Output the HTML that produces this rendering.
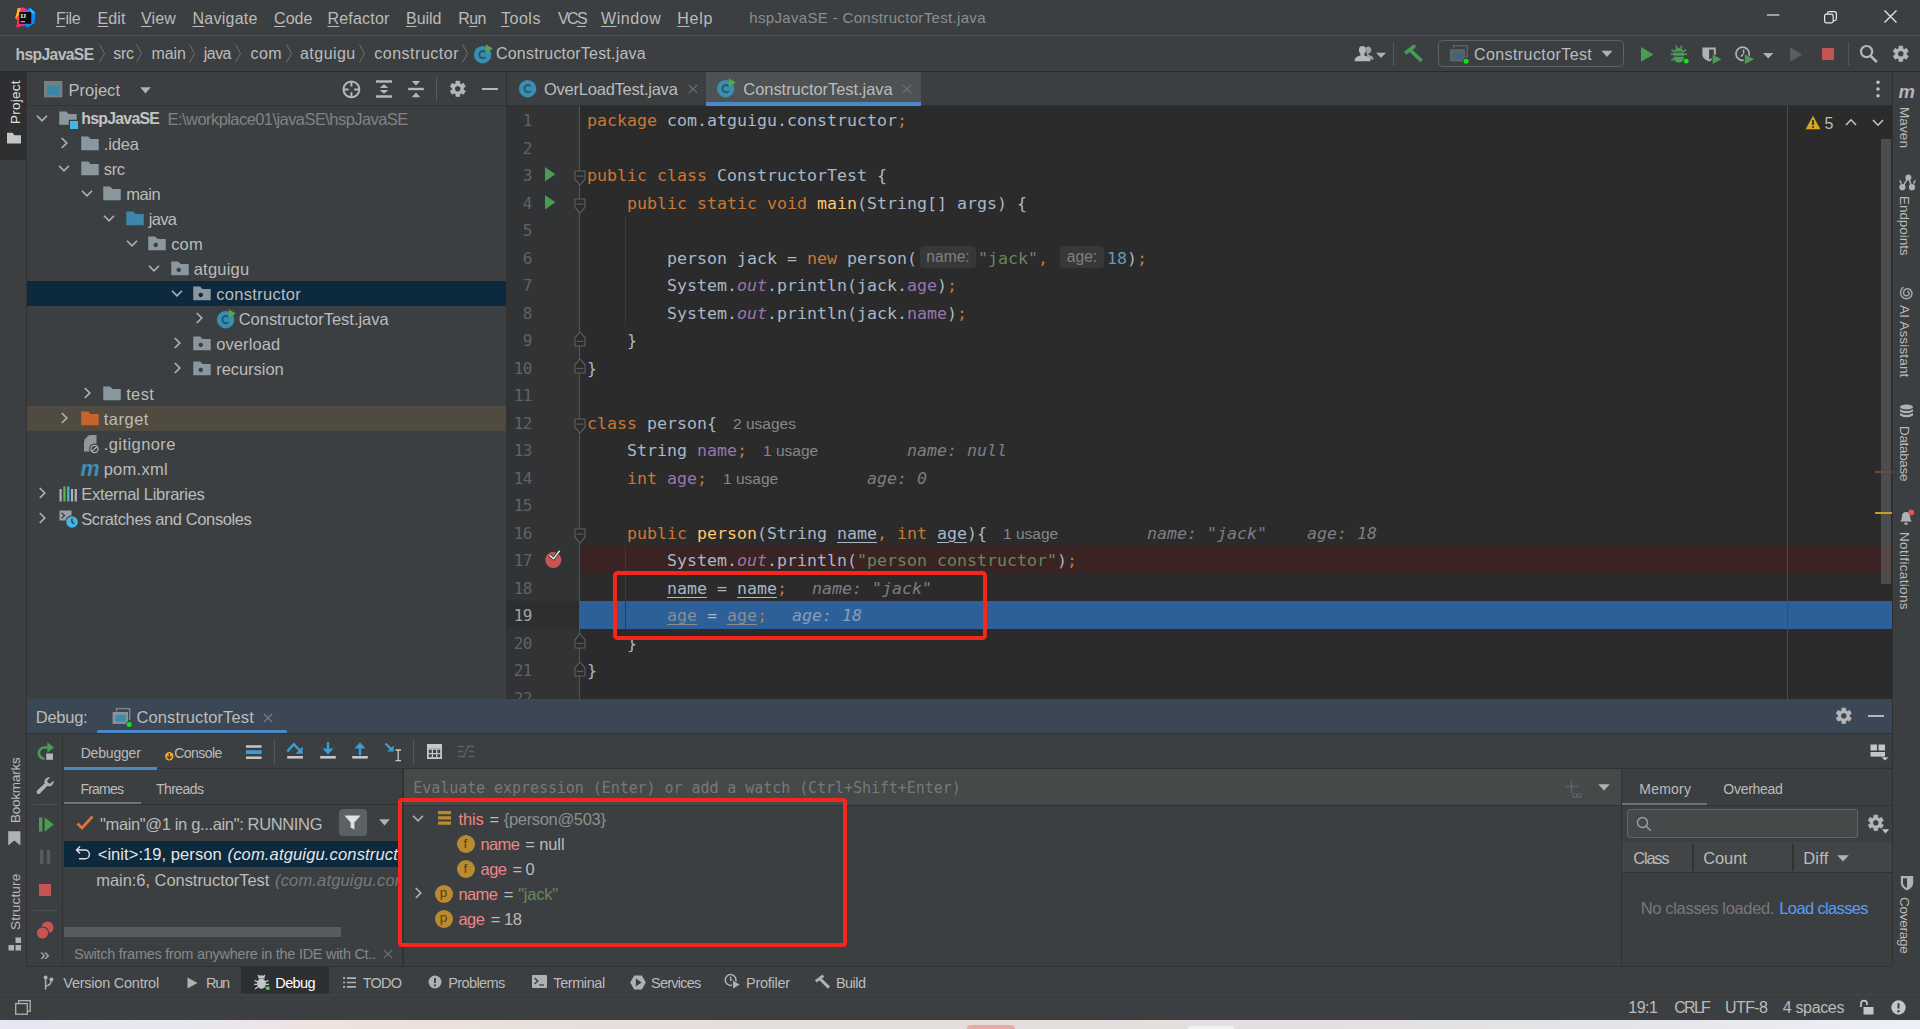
<!DOCTYPE html>
<html lang="en">
<head>
<meta charset="utf-8">
<title>hspJavaSE - ConstructorTest.java</title>
<style>
html,body{margin:0;padding:0;background:#3c3f41;}
body{width:1920px;height:1029px;position:relative;overflow:hidden;font-family:"Liberation Sans", "DejaVu Sans", sans-serif;color:#bbbbbb;}
div,svg,span.t,span.ln,pre.cl{position:absolute;}
svg{display:block;overflow:visible;}
.t{white-space:pre;line-height:1;display:block;}
.t u{text-decoration:underline;text-underline-offset:2px;text-decoration-thickness:1px;}
.mo{font-family:"DejaVu Sans Mono", "Liberation Mono", monospace;}
.ed{font-family:"DejaVu Sans Mono", "Liberation Mono", monospace;font-size:16.61px;}
.ln{left:0;width:25px;margin-top:1.3px;text-align:right;line-height:27.5px;height:27.5px;letter-spacing:-0.5px;font-size:16px;}
.cl{left:80px;margin:1.3px 0 0 0;font-family:inherit;font-size:inherit;line-height:27.5px;height:27.5px;color:#a9b7c6;white-space:pre;}
.cl b{font-weight:normal;}
.cl i{font-style:normal;display:inline-block;}
.k{color:#cc7832;} .s{color:#6a8759;} .n{color:#6897bb;} .f{color:#9876aa;} .fi{color:#9876aa;font-style:italic;} .m{color:#ffc66d;}
.pu{text-decoration:underline;text-underline-offset:3px;text-decoration-thickness:1px;}
.g{color:#888c93;}
.dv{color:#7b7f85;font-style:italic;} .x{color:#8a9db5;}
.h{font-family:"Liberation Sans", "DejaVu Sans", sans-serif;font-size:15.6px;color:#7e8184;background:#373839;border-radius:4px;height:22px;line-height:22px;text-align:center;vertical-align:1.6px;}
.u{font-family:"Liberation Sans", "DejaVu Sans", sans-serif;font-size:15.5px;color:#858789;height:22px;line-height:24px;box-sizing:border-box;padding-left:16px;vertical-align:0px;}
</style>
</head>
<body>
<section class="frame">
<div style="left:0px;top:0px;width:1920px;height:1029px;background:#3c3f41;"></div>
<div style="left:0px;top:35px;width:1920px;height:1px;background:#515355;"></div>
<div style="left:0px;top:71px;width:1920px;height:1px;background:#2b2b2b;"></div>
<div style="left:0px;top:72px;width:27px;height:923px;background:#3c3f41;"></div>
<div style="left:0px;top:72px;width:26px;height:88px;background:#2d2f30;"></div>
<div style="left:26px;top:72px;width:1px;height:895px;background:#323232;"></div>
<div style="left:27px;top:105px;width:480px;height:1px;background:#323232;"></div>
<div style="left:506px;top:72px;width:1px;height:627px;background:#323232;"></div>
</section>
<header class="menubar">
<svg style="left:14.8px;top:7px;" width="20.6" height="21" viewBox="0 0 20.6 21"><defs><linearGradient id="lg1" x1="0" y1="0" x2="1" y2="0.25"><stop offset="0" stop-color="#fda00f"/><stop offset=".3" stop-color="#fe2f6b"/><stop offset=".55" stop-color="#b13fd6"/><stop offset=".7" stop-color="#1a7ff5"/><stop offset="1" stop-color="#0a8af7"/></linearGradient></defs>
<path d="M2.4 1.4 L8.5 0.2 L12.4 3 L14.4 0.6 L20.4 6 L19.6 16 L12.2 20.8 L9.2 18.2 L1.4 20.6 L2.6 13.4 L0.2 11.2 L1.8 6 Z" fill="url(#lg1)"/>
<path d="M2.4 1.4 L5.6 0.9 L4 8 L0.2 11.2 L1.8 6 Z" fill="#fdb60d"/><path d="M14.4 0.6 L20.4 6 L16.4 6.4 Z" fill="#21d0fd"/><path d="M1.4 20.6 L2.6 13.4 L9.2 18.2 Z" fill="#fe2b62"/>
<rect x="4.3" y="5" width="12" height="11.8" fill="#0b0b0f"/><rect x="5.6" y="14.3" width="4.4" height="0.9" fill="#e8e8e8"/>
<text x="5.4" y="11.1" font-family="Liberation Serif, serif" font-weight="700" font-size="6.6" fill="#ffffff" letter-spacing="-0.2">IJ</text></svg>
<span class="t" style="left:56px;top:10.56px;font-size:16px;color:#bbbbbb;letter-spacing:-0.371px;"><u>F</u>ile</span>
<span class="t" style="left:97.5px;top:10.56px;font-size:16px;color:#bbbbbb;letter-spacing:0.121px;"><u>E</u>dit</span>
<span class="t" style="left:141px;top:10.56px;font-size:16px;color:#bbbbbb;letter-spacing:0.170px;"><u>V</u>iew</span>
<span class="t" style="left:192.5px;top:10.56px;font-size:16px;color:#bbbbbb;letter-spacing:0.246px;"><u>N</u>avigate</span>
<span class="t" style="left:274px;top:10.56px;font-size:16px;color:#bbbbbb;letter-spacing:0.067px;"><u>C</u>ode</span>
<span class="t" style="left:327.5px;top:10.56px;font-size:16px;color:#bbbbbb;letter-spacing:0.202px;"><u>R</u>efactor</span>
<span class="t" style="left:406px;top:10.56px;font-size:16px;color:#bbbbbb;letter-spacing:-0.017px;"><u>B</u>uild</span>
<span class="t" style="left:458.3px;top:10.56px;font-size:16px;color:#bbbbbb;letter-spacing:-0.670px;">R<u>u</u>n</span>
<span class="t" style="left:501px;top:10.56px;font-size:16px;color:#bbbbbb;letter-spacing:0.520px;"><u>T</u>ools</span>
<span class="t" style="left:558px;top:10.56px;font-size:16px;color:#bbbbbb;letter-spacing:-1.682px;">VC<u>S</u></span>
<span class="t" style="left:601px;top:10.56px;font-size:16px;color:#bbbbbb;letter-spacing:0.560px;"><u>W</u>indow</span>
<span class="t" style="left:677.3px;top:10.56px;font-size:16px;color:#bbbbbb;letter-spacing:0.708px;"><u>H</u>elp</span>
<span class="t" style="left:749.3px;top:10.30px;font-size:15px;color:#8c8e90;letter-spacing:0.332px;">hspJavaSE - ConstructorTest.java</span>
<svg style="left:1767px;top:9.3px;" width="12.4" height="12" viewBox="0 0 12.4 12"><path d="M0 6h12.4" stroke="#f0f0f0" stroke-width="1.1"/></svg>
<svg style="left:1824.2px;top:10.9px;" width="13" height="13" viewBox="0 0 13 13"><rect x="0.6" y="3.2" width="8.6" height="8.6" rx="1.8" fill="none" stroke="#e8e8e8" stroke-width="1.2"/><path d="M3.4 3 V2.4 Q3.4 0.6 5.2 0.6 H10.2 Q12.4 0.6 12.4 2.8 V7.8 Q12.4 9.6 10.6 9.6 H9.6" fill="none" stroke="#e8e8e8" stroke-width="1.2"/></svg>
<svg style="left:1883.6px;top:10.4px;" width="13" height="13" viewBox="0 0 13 13"><path d="M0.5 0.5 L12.5 12.5 M12.5 0.5 L0.5 12.5" stroke="#e8e8e8" stroke-width="1.3"/></svg>
</header>
<nav class="navbar">
<span class="t" style="left:15.5px;top:46.59px;font-size:15.6px;color:#bbbbbb;font-weight:700;letter-spacing:-0.585px;">hspJavaSE</span>
<span class="t" style="left:113.25px;top:46.26px;font-size:16px;color:#bbbbbb;letter-spacing:-0.331px;">src</span>
<span class="t" style="left:151.5px;top:46.26px;font-size:16px;color:#bbbbbb;letter-spacing:-0.125px;">main</span>
<span class="t" style="left:203.75px;top:46.26px;font-size:16px;color:#bbbbbb;letter-spacing:-0.531px;">java</span>
<span class="t" style="left:250.5px;top:46.26px;font-size:16px;color:#bbbbbb;letter-spacing:0.406px;">com</span>
<span class="t" style="left:300px;top:46.26px;font-size:16px;color:#bbbbbb;letter-spacing:0.462px;">atguigu</span>
<span class="t" style="left:374.25px;top:46.26px;font-size:16px;color:#bbbbbb;letter-spacing:0.510px;">constructor</span>
<svg style="left:98.5px;top:43.5px;" width="7" height="19" viewBox="0 0 7 19"><path d="M0.5 0.5 L5.5 9.5 L0.5 18.5" fill="none" stroke="#6e7072" stroke-width="1"/></svg>
<svg style="left:136px;top:43.5px;" width="7" height="19" viewBox="0 0 7 19"><path d="M0.5 0.5 L5.5 9.5 L0.5 18.5" fill="none" stroke="#6e7072" stroke-width="1"/></svg>
<svg style="left:189px;top:43.5px;" width="7" height="19" viewBox="0 0 7 19"><path d="M0.5 0.5 L5.5 9.5 L0.5 18.5" fill="none" stroke="#6e7072" stroke-width="1"/></svg>
<svg style="left:235px;top:43.5px;" width="7" height="19" viewBox="0 0 7 19"><path d="M0.5 0.5 L5.5 9.5 L0.5 18.5" fill="none" stroke="#6e7072" stroke-width="1"/></svg>
<svg style="left:286px;top:43.5px;" width="7" height="19" viewBox="0 0 7 19"><path d="M0.5 0.5 L5.5 9.5 L0.5 18.5" fill="none" stroke="#6e7072" stroke-width="1"/></svg>
<svg style="left:359px;top:43.5px;" width="7" height="19" viewBox="0 0 7 19"><path d="M0.5 0.5 L5.5 9.5 L0.5 18.5" fill="none" stroke="#6e7072" stroke-width="1"/></svg>
<svg style="left:461.5px;top:43.5px;" width="7" height="19" viewBox="0 0 7 19"><path d="M0.5 0.5 L5.5 9.5 L0.5 18.5" fill="none" stroke="#6e7072" stroke-width="1"/></svg>
<svg style="left:473.0px;top:43.5px;" width="20" height="20" viewBox="0 0 16 16"><circle cx="7.7" cy="8.5" r="7" fill="#3a8fb0"/><path d="M10.2 10.4 A2.9 2.9 0 1 1 10.2 6.6" fill="none" stroke="#28576b" stroke-width="1.5"/><path d="M10.2 0.2 L15.8 3.6 L10.2 7.2 Z" fill="#57a64a"/></svg>
<span class="t" style="left:496px;top:46.26px;font-size:16px;color:#bbbbbb;letter-spacing:0.198px;">ConstructorTest.java</span>
<svg style="left:1354px;top:45px;" width="33" height="18" viewBox="0 0 33 18"><path d="M11.5 3 a3.2 3.6 0 1 1 2.6 5.6 L15 10 Q19.4 11 19.6 14.4 H14 Z" fill="#9da0a2"/><ellipse cx="8.4" cy="5" rx="3.5" ry="4" fill="#b4b6b8"/><path d="M0.6 16.2 Q0.6 12.6 3.4 11.6 L6.4 10.4 V8 H10.4 V10.4 L13.4 11.6 Q16.4 12.6 16.4 16.2 Z" fill="#b4b6b8"/><path d="M22 7.8 H32 L27 13 Z" fill="#afb1b3"/></svg>
<div style="left:1393.2px;top:42px;width:1px;height:24px;background:#555759;"></div>
<svg style="left:1403px;top:44px;" width="22" height="20" viewBox="0 0 22 20"><path d="M2.2 9.2 L11.6 2" stroke="#499c54" stroke-width="3.6" fill="none"/><path d="M7.4 6.2 L18.6 17" stroke="#499c54" stroke-width="3.6" fill="none"/><path d="M8.6 1.6 L12.6 0.9 L13.4 2.6 Z" fill="#499c54"/></svg>
<div style="left:1437.6px;top:40px;width:186px;height:27.4px;border:1.2px solid #606366;border-radius:4.5px;box-sizing:border-box;"></div>
<svg style="left:1449px;top:44px;" width="21" height="20" viewBox="0 0 21 20"><rect x="4.6" y="1.7" width="13.6" height="11" fill="none" stroke="#596065" stroke-width="1.5"/><rect x="0.2" y="4.4" width="16.4" height="13.8" fill="#3c3f41"/><rect x="0.9" y="5.1" width="15.1" height="12.4" fill="#5c6266"/><rect x="3.6" y="8.9" width="10.4" height="6.2" fill="#3f6679"/><circle cx="17.1" cy="17.2" r="3.2" fill="#3c3f41"/><circle cx="17.1" cy="17.2" r="2.5" fill="#12e212"/></svg>
<span class="t" style="left:1474px;top:46.76px;font-size:16px;color:#bbbbbb;letter-spacing:0.411px;">ConstructorTest</span>
<svg style="left:1601px;top:50px;" width="12" height="8" viewBox="0 0 12 8"><path d="M0.5 0.8 H11.5 L6 7 Z" fill="#afb1b3"/></svg>
<svg style="left:1640.8px;top:46.5px;" width="13" height="15" viewBox="0 0 13 15"><path d="M0 0 L12.6 7.4 L0 14.8 Z" fill="#499c54"/></svg>
<svg style="left:1670px;top:45px;" width="19" height="19" viewBox="0 0 19 19"><path d="M4.4 6.6 Q4.4 3 8.8 3 Q13.2 3 13.2 6.6 Z" fill="#499c54"/><rect x="3.6" y="7.6" width="10.4" height="3.1" fill="#499c54"/><path d="M3.6 11.8 H14 Q14 17.6 8.8 17.6 Q3.6 17.6 3.6 11.8 Z" fill="#499c54"/><path d="M0.6 9.2 H17 M1.6 4.6 L4.6 7 M16 4.6 L13 7 M1.4 15.6 L4.6 13 M16.2 15.6 L13 13 M5.6 0.6 L7.4 3.4 M12 0.6 L10.2 3.4" stroke="#499c54" stroke-width="1.6" fill="none"/><circle cx="16.2" cy="16.2" r="3.2" fill="#3c3f41"/><circle cx="16.2" cy="16.2" r="2.4" fill="#1ee01e"/></svg>
<svg style="left:1701.5px;top:46.5px;" width="21" height="18" viewBox="0 0 21 18"><path d="M0.4 0.4 H13.8 V7.6 Q13.8 12 7.1 14.6 Q0.4 12 0.4 7.6 Z" fill="#afb1b3"/><path d="M7.1 2.4 H11.8 V7.4 Q11.8 10.4 7.1 12.4 Z" fill="#3c3f41"/><path d="M9.6 6 L20.4 12 L9.6 18 Z" fill="#3c3f41"/><path d="M10.6 7.4 L19.4 12.2 L10.6 17 Z" fill="#499c54"/></svg>
<svg style="left:1735px;top:45.5px;" width="21" height="19" viewBox="0 0 21 19"><circle cx="7.6" cy="7.8" r="6.6" fill="none" stroke="#afb1b3" stroke-width="1.7"/><path d="M8.6 3.6 V8 L5.8 10.6" fill="none" stroke="#afb1b3" stroke-width="1.5"/><path d="M8.6 7 L20.4 13 L8.6 19 Z" fill="#3c3f41"/><path d="M9.9 8.6 L19.2 13.2 L9.9 18 Z" fill="#499c54"/></svg>
<svg style="left:1763px;top:53px;" width="11" height="6" viewBox="0 0 11 6"><path d="M0 0 H10.4 L5.2 5.6 Z" fill="#afb1b3"/></svg>
<svg style="left:1789.8px;top:46.5px;" width="13" height="15" viewBox="0 0 13 15"><path d="M0 0 L12.4 7.4 L0 14.8 Z" fill="#5a5d5f"/></svg>
<div style="left:1821.8px;top:48px;width:12.4px;height:12.2px;background:#c75450;"></div>
<div style="left:1848.2px;top:42px;width:1px;height:24px;background:#515456;"></div>
<svg style="left:1859px;top:44px;" width="20" height="20" viewBox="0 0 20 20"><circle cx="7.6" cy="7.6" r="5.6" fill="none" stroke="#b4b6b8" stroke-width="2.2"/><path d="M11.6 11.8 L17.8 18" stroke="#b4b6b8" stroke-width="2.6"/></svg>
<svg style="left:1892.2px;top:45.2px;" width="17.6" height="17.6" viewBox="0 0 16 16"><path fill-rule="evenodd" d="M9.80 3.23 L9.71 1.01 L6.29 1.01 L6.20 3.23 L4.76 4.06 L2.80 3.02 L1.09 5.99 L2.97 7.17 L2.97 8.83 L1.09 10.01 L2.80 12.98 L4.76 11.94 L6.20 12.77 L6.29 14.99 L9.71 14.99 L9.80 12.77 L11.24 11.94 L13.20 12.98 L14.91 10.01 L13.03 8.83 L13.03 7.17 L14.91 5.99 L13.20 3.02 L11.24 4.06 Z M8 5.2 a2.8 2.8 0 1 0 0.001 0 Z" fill="#b4b6b8" stroke="#b4b6b8" stroke-width="0.6" stroke-linejoin="round"/></svg>
</nav>
<aside class="left-stripe">
<span class="t" style="left:15.8px;top:124.4px;transform:rotate(-90deg) translateY(-50%);transform-origin:0 0;font-size:13.5px;color:#e0e0e0;letter-spacing:0.241px;">Project</span>
<svg style="left:6px;top:132px;" width="16" height="12" viewBox="0 0 16 12"><path d="M1 11.5 H15 V3.2 H8.4 L6.6 0.8 H1 Z" fill="#c3c5c7"/></svg>
<span class="t" style="left:15.8px;top:823.3px;transform:rotate(-90deg) translateY(-50%);transform-origin:0 0;font-size:13.5px;color:#bbbbbb;letter-spacing:-0.227px;">Bookmarks</span>
<svg style="left:8.4px;top:830.5px;" width="13" height="15" viewBox="0 0 13 15"><path d="M0.2 0.3 H12.4 V14.6 L6.3 9.6 L0.2 14.6 Z" fill="#afb1b3"/></svg>
<span class="t" style="left:15.8px;top:930px;transform:rotate(-90deg) translateY(-50%);transform-origin:0 0;font-size:13.5px;color:#bbbbbb;letter-spacing:0.179px;">Structure</span>
<svg style="left:8px;top:937px;" width="14" height="14" viewBox="0 0 14 14"><rect x="7.5" y="0.5" width="5.5" height="5.5" fill="#afb1b3"/><rect x="0.5" y="8" width="5.5" height="5.5" fill="#afb1b3"/><rect x="7.5" y="8" width="5.5" height="5.5" fill="#afb1b3"/></svg>
</aside>
<aside class="project">
<svg style="left:43.8px;top:81.3px;" width="18.4" height="16.4" viewBox="0 0 18.4 16.4"><rect x="0" y="0" width="18.4" height="16.4" fill="#757f86"/><rect x="3.1" y="4.4" width="12.5" height="9.7" fill="#3a88a8"/></svg>
<span class="t" style="left:68.4px;top:81.83px;font-size:16.5px;color:#bbbbbb;letter-spacing:0.037px;">Project</span>
<svg style="left:139.5px;top:87px;" width="11" height="7" viewBox="0 0 11 7"><path d="M0.2 0.3 H10.8 L5.5 6.6 Z" fill="#afb1b3"/></svg>
<svg style="left:341.5px;top:79.5px;" width="19" height="19" viewBox="0 0 19 19"><circle cx="9.4" cy="9.4" r="7.9" fill="none" stroke="#b4b6b8" stroke-width="2"/><path d="M9.4 1.5 V6.6 M9.4 12.2 V17.3 M1.5 9.4 H6.6 M12.2 9.4 H17.3" stroke="#b4b6b8" stroke-width="2"/></svg>
<svg style="left:376px;top:80px;" width="16" height="18" viewBox="0 0 16 18"><path d="M0 1.4 H16 M0 16.6 H16" stroke="#b4b6b8" stroke-width="2.5"/><path d="M3.7 8.1 L8 4.3 L12.3 8.1 Z M3.7 10 L8 13.8 L12.3 10 Z" fill="#b4b6b8"/></svg>
<svg style="left:408px;top:80px;" width="16" height="18" viewBox="0 0 16 18"><path d="M0.2 9 H15.8" stroke="#b4b6b8" stroke-width="2.4"/><path d="M3.7 1 L8 5.6 L12.3 1 Z M3.7 17.2 L8 12.6 L12.3 17.2 Z" fill="#b4b6b8"/></svg>
<div style="left:436px;top:77px;width:1px;height:23.5px;background:#595c5e;"></div>
<svg style="left:449.2px;top:80.2px;" width="17.6" height="17.6" viewBox="0 0 16 16"><path fill-rule="evenodd" d="M9.80 3.23 L9.71 1.01 L6.29 1.01 L6.20 3.23 L4.76 4.06 L2.80 3.02 L1.09 5.99 L2.97 7.17 L2.97 8.83 L1.09 10.01 L2.80 12.98 L4.76 11.94 L6.20 12.77 L6.29 14.99 L9.71 14.99 L9.80 12.77 L11.24 11.94 L13.20 12.98 L14.91 10.01 L13.03 8.83 L13.03 7.17 L14.91 5.99 L13.20 3.02 L11.24 4.06 Z M8 5.2 a2.8 2.8 0 1 0 0.001 0 Z" fill="#b4b6b8" stroke="#b4b6b8" stroke-width="0.6" stroke-linejoin="round"/></svg>
<div style="left:482px;top:87.8px;width:16px;height:2.4px;background:#b4b6b8;"></div>
<div style="left:27px;top:281px;width:479px;height:25px;background:#0d293e;"></div>
<div style="left:27px;top:406px;width:479px;height:25px;background:#4f4b41;"></div>
<span class="t" style="left:81.2px;top:111.43px;font-size:15.8px;color:#c4c4c4;font-weight:700;letter-spacing:-0.707px;">hspJavaSE</span>
<svg style="left:31.800000000000004px;top:107.9px;" width="20" height="20" viewBox="0 0 16 16"><path d="M4 6.2 L8 10.2 L12 6.2" fill="none" stroke="#adb0b3" stroke-width="1.4"/></svg>
<svg style="left:57.7px;top:109.0px;" width="20" height="20" viewBox="0 0 16 16"><path d="M1 12.5 H15 V4 H8.5 L6.5 2 H1 Z" fill="#8b979f"/><rect x="8.6" y="8.6" width="7.4" height="7.4" fill="#3c3f41"/><rect x="9.6" y="9.6" width="6.4" height="6.4" fill="#40b6e0"/></svg>
<span class="t" style="left:103.7px;top:135.83px;font-size:16.5px;color:#bbbbbb;letter-spacing:-0.107px;">.idea</span>
<svg style="left:54.0px;top:133.0px;" width="20" height="20" viewBox="0 0 16 16"><path d="M6.2 4 L10.2 8 L6.2 12" fill="none" stroke="#adb0b3" stroke-width="1.4"/></svg>
<svg style="left:79.9px;top:133.8px;" width="20" height="20" viewBox="0 0 16 16"><path d="M1 13 H15 V4 H8.5 L6.5 2 H1 Z" fill="#8b979f"/></svg>
<span class="t" style="left:103.7px;top:160.83px;font-size:16.5px;color:#bbbbbb;letter-spacing:-0.280px;">src</span>
<svg style="left:54.3px;top:157.9px;" width="20" height="20" viewBox="0 0 16 16"><path d="M4 6.2 L8 10.2 L12 6.2" fill="none" stroke="#adb0b3" stroke-width="1.4"/></svg>
<svg style="left:79.9px;top:158.8px;" width="20" height="20" viewBox="0 0 16 16"><path d="M1 13 H15 V4 H8.5 L6.5 2 H1 Z" fill="#8b979f"/></svg>
<span class="t" style="left:126.2px;top:185.83px;font-size:16.5px;color:#bbbbbb;letter-spacing:-0.447px;">main</span>
<svg style="left:76.8px;top:182.9px;" width="20" height="20" viewBox="0 0 16 16"><path d="M4 6.2 L8 10.2 L12 6.2" fill="none" stroke="#adb0b3" stroke-width="1.4"/></svg>
<svg style="left:102.4px;top:183.8px;" width="20" height="20" viewBox="0 0 16 16"><path d="M1 13 H15 V4 H8.5 L6.5 2 H1 Z" fill="#8b979f"/></svg>
<span class="t" style="left:148.7px;top:210.83px;font-size:16.5px;color:#bbbbbb;letter-spacing:-0.652px;">java</span>
<svg style="left:99.29999999999998px;top:207.9px;" width="20" height="20" viewBox="0 0 16 16"><path d="M4 6.2 L8 10.2 L12 6.2" fill="none" stroke="#adb0b3" stroke-width="1.4"/></svg>
<svg style="left:124.89999999999998px;top:208.8px;" width="20" height="20" viewBox="0 0 16 16"><path d="M1 13 H15 V4 H8.5 L6.5 2 H1 Z" fill="#3d88a8"/></svg>
<span class="t" style="left:171.2px;top:235.83px;font-size:16.5px;color:#bbbbbb;letter-spacing:0.131px;">com</span>
<svg style="left:121.79999999999998px;top:232.9px;" width="20" height="20" viewBox="0 0 16 16"><path d="M4 6.2 L8 10.2 L12 6.2" fill="none" stroke="#adb0b3" stroke-width="1.4"/></svg>
<svg style="left:147.39999999999998px;top:233.8px;" width="20" height="20" viewBox="0 0 16 16"><path fill-rule="evenodd" d="M1 13 H15 V4 H8.5 L6.5 2 H1 Z M7 6.9 a1.8 1.8 0 1 0 0.001 0 Z" fill="#8b979f"/></svg>
<span class="t" style="left:193.7px;top:260.83px;font-size:16.5px;color:#bbbbbb;letter-spacing:0.225px;">atguigu</span>
<svg style="left:144.29999999999998px;top:257.9px;" width="20" height="20" viewBox="0 0 16 16"><path d="M4 6.2 L8 10.2 L12 6.2" fill="none" stroke="#adb0b3" stroke-width="1.4"/></svg>
<svg style="left:169.89999999999998px;top:258.8px;" width="20" height="20" viewBox="0 0 16 16"><path fill-rule="evenodd" d="M1 13 H15 V4 H8.5 L6.5 2 H1 Z M7 6.9 a1.8 1.8 0 1 0 0.001 0 Z" fill="#8b979f"/></svg>
<span class="t" style="left:216.2px;top:285.83px;font-size:16.5px;color:#bbbbbb;letter-spacing:0.302px;">constructor</span>
<svg style="left:166.79999999999998px;top:282.9px;" width="20" height="20" viewBox="0 0 16 16"><path d="M4 6.2 L8 10.2 L12 6.2" fill="none" stroke="#adb0b3" stroke-width="1.4"/></svg>
<svg style="left:192.39999999999998px;top:283.8px;" width="20" height="20" viewBox="0 0 16 16"><path fill-rule="evenodd" d="M1 13 H15 V4 H8.5 L6.5 2 H1 Z M7 6.9 a1.8 1.8 0 1 0 0.001 0 Z" fill="#8b979f"/></svg>
<span class="t" style="left:238.7px;top:310.83px;font-size:16.5px;color:#bbbbbb;letter-spacing:-0.021px;">ConstructorTest.java</span>
<svg style="left:189.0px;top:308.0px;" width="20" height="20" viewBox="0 0 16 16"><path d="M6.2 4 L10.2 8 L6.2 12" fill="none" stroke="#adb0b3" stroke-width="1.4"/></svg>
<svg style="left:215.7px;top:308.5px;" width="20" height="20" viewBox="0 0 16 16"><circle cx="7.7" cy="8.5" r="7" fill="#3a8fb0"/><path d="M10.2 10.4 A2.9 2.9 0 1 1 10.2 6.6" fill="none" stroke="#28576b" stroke-width="1.5"/><path d="M10.2 0.2 L15.8 3.6 L10.2 7.2 Z" fill="#57a64a"/></svg>
<span class="t" style="left:216.2px;top:335.83px;font-size:16.5px;color:#bbbbbb;letter-spacing:0.107px;">overload</span>
<svg style="left:166.5px;top:333.0px;" width="20" height="20" viewBox="0 0 16 16"><path d="M6.2 4 L10.2 8 L6.2 12" fill="none" stroke="#adb0b3" stroke-width="1.4"/></svg>
<svg style="left:192.39999999999998px;top:333.8px;" width="20" height="20" viewBox="0 0 16 16"><path fill-rule="evenodd" d="M1 13 H15 V4 H8.5 L6.5 2 H1 Z M7 6.9 a1.8 1.8 0 1 0 0.001 0 Z" fill="#8b979f"/></svg>
<span class="t" style="left:216.2px;top:360.83px;font-size:16.5px;color:#bbbbbb;letter-spacing:-0.044px;">recursion</span>
<svg style="left:166.5px;top:358.0px;" width="20" height="20" viewBox="0 0 16 16"><path d="M6.2 4 L10.2 8 L6.2 12" fill="none" stroke="#adb0b3" stroke-width="1.4"/></svg>
<svg style="left:192.39999999999998px;top:358.8px;" width="20" height="20" viewBox="0 0 16 16"><path fill-rule="evenodd" d="M1 13 H15 V4 H8.5 L6.5 2 H1 Z M7 6.9 a1.8 1.8 0 1 0 0.001 0 Z" fill="#8b979f"/></svg>
<span class="t" style="left:126.2px;top:385.83px;font-size:16.5px;color:#bbbbbb;letter-spacing:0.340px;">test</span>
<svg style="left:76.5px;top:383.0px;" width="20" height="20" viewBox="0 0 16 16"><path d="M6.2 4 L10.2 8 L6.2 12" fill="none" stroke="#adb0b3" stroke-width="1.4"/></svg>
<svg style="left:102.4px;top:383.8px;" width="20" height="20" viewBox="0 0 16 16"><path d="M1 13 H15 V4 H8.5 L6.5 2 H1 Z" fill="#8b979f"/></svg>
<span class="t" style="left:103.7px;top:410.83px;font-size:16.5px;color:#bbbbbb;letter-spacing:0.509px;">target</span>
<svg style="left:54.0px;top:408.0px;" width="20" height="20" viewBox="0 0 16 16"><path d="M6.2 4 L10.2 8 L6.2 12" fill="none" stroke="#adb0b3" stroke-width="1.4"/></svg>
<svg style="left:79.9px;top:408.8px;" width="20" height="20" viewBox="0 0 16 16"><path d="M1 13 H15 V4 H8.5 L6.5 2 H1 Z" fill="#c8632b"/></svg>
<span class="t" style="left:103.7px;top:435.83px;font-size:16.5px;color:#bbbbbb;letter-spacing:0.433px;">.gitignore</span>
<svg style="left:83.5px;top:435.0px;" width="16" height="19" viewBox="0 0 16 19"><path d="M6 0 H12.5 V16.5 H0 V6 Z" fill="#8f979d"/><path d="M0 5 L5 0 V5 Z" fill="#8f979d"/><circle cx="10.5" cy="14" r="5.4" fill="#3c3f41"/><circle cx="10.5" cy="14" r="3.6" fill="none" stroke="#a9afb4" stroke-width="1.3"/><path d="M8 16.5 L13 11.5" stroke="#a9afb4" stroke-width="1.3"/></svg>
<span class="t" style="left:103.7px;top:460.83px;font-size:16.5px;color:#bbbbbb;letter-spacing:0.255px;">pom.xml</span>
<span class="t" style="left:80.5px;top:458.6px;font-size:21.5px;font-weight:700;font-style:italic;color:#3e8fb5;">m</span>
<span class="t" style="left:81.2px;top:485.83px;font-size:16.5px;color:#bbbbbb;letter-spacing:-0.279px;">External Libraries</span>
<svg style="left:31.5px;top:483.0px;" width="20" height="20" viewBox="0 0 16 16"><path d="M6.2 4 L10.2 8 L6.2 12" fill="none" stroke="#adb0b3" stroke-width="1.4"/></svg>
<svg style="left:58.5px;top:485.5px;" width="19" height="16" viewBox="0 0 19 16"><rect x="0.5" y="3" width="2.2" height="12.5" fill="#afb1b3"/><rect x="4.3" y="0.5" width="2.2" height="15" fill="#62b543"/><rect x="8.1" y="0.5" width="2.2" height="15" fill="#40b6e0"/><rect x="11.9" y="3" width="2.2" height="12.5" fill="#afb1b3"/><rect x="15.7" y="3" width="2.2" height="12.5" fill="#afb1b3"/></svg>
<span class="t" style="left:81.2px;top:510.83px;font-size:16.5px;color:#bbbbbb;letter-spacing:-0.389px;">Scratches and Consoles</span>
<svg style="left:31.5px;top:508.0px;" width="20" height="20" viewBox="0 0 16 16"><path d="M6.2 4 L10.2 8 L6.2 12" fill="none" stroke="#adb0b3" stroke-width="1.4"/></svg>
<svg style="left:58.5px;top:509.5px;" width="20" height="19" viewBox="0 0 20 19"><rect x="0.5" y="0.5" width="12" height="10" fill="#9aa0a5"/><path d="M2.5 2.8 L5.5 5.5 L2.5 8.2" stroke="#3c3f41" stroke-width="1.3" fill="none"/><circle cx="13" cy="12" r="6.8" fill="#3c3f41"/><circle cx="13" cy="12" r="5.8" fill="#40b6e0"/><path d="M13 8.6 V12.2 L15.4 13.8" stroke="#3c3f41" stroke-width="1.5" fill="none"/></svg>
<span class="t" style="left:167.6px;top:110.83px;font-size:16.5px;color:#808284;letter-spacing:-0.568px;">E:\workplace01\javaSE\hspJavaSE</span>
</aside>
<main class="editor">
<div style="left:507px;top:72px;width:1385px;height:34px;background:#3c3f41;"></div>
<div style="left:507px;top:105px;width:1385px;height:1px;background:#323232;"></div>
<svg style="left:518.1px;top:78.3px;" width="20" height="20" viewBox="0 0 16 16"><circle cx="7.7" cy="8.5" r="7" fill="#3a8fb0"/><path d="M10.2 10.4 A2.9 2.9 0 1 1 10.2 6.6" fill="none" stroke="#28576b" stroke-width="1.5"/></svg>
<span class="t" style="left:544px;top:81.23px;font-size:16.5px;color:#bbbbbb;letter-spacing:-0.235px;">OverLoadTest.java</span>
<svg style="left:688px;top:84px;" width="10" height="10" viewBox="0 0 10 10"><path d="M0.8 0.8 L9.2 9.2 M9.2 0.8 L0.8 9.2" stroke="#6e7072" stroke-width="1.2"/></svg>
<div style="left:706px;top:72px;width:215px;height:30px;background:#4e5254;"></div>
<div style="left:706px;top:102px;width:215px;height:4px;background:#4a88c7;"></div>
<svg style="left:716.2px;top:78.0px;" width="20" height="20" viewBox="0 0 16 16"><circle cx="7.7" cy="8.5" r="7" fill="#3a8fb0"/><path d="M10.2 10.4 A2.9 2.9 0 1 1 10.2 6.6" fill="none" stroke="#28576b" stroke-width="1.5"/><path d="M10.2 0.2 L15.8 3.6 L10.2 7.2 Z" fill="#57a64a"/></svg>
<span class="t" style="left:743.3px;top:81.23px;font-size:16.5px;color:#bbbbbb;letter-spacing:-0.052px;">ConstructorTest.java</span>
<svg style="left:901.5px;top:84px;" width="10" height="10" viewBox="0 0 10 10"><path d="M0.8 0.8 L9.2 9.2 M9.2 0.8 L0.8 9.2" stroke="#6e7072" stroke-width="1.2"/></svg>
<svg style="left:1875.5px;top:80px;" width="4" height="18" viewBox="0 0 4 18"><circle cx="2" cy="2.2" r="1.7" fill="#c4c6c8"/><circle cx="2" cy="9" r="1.7" fill="#c4c6c8"/><circle cx="2" cy="15.8" r="1.7" fill="#c4c6c8"/></svg>
<div style="left:507px;top:106px;width:73px;height:593px;background:#313335;"></div>
<div style="left:507px;top:601px;width:72px;height:28px;background:#2d2e2f;"></div>
<div style="left:580px;top:106px;width:1312px;height:593px;background:#2b2b2b;"></div>
<div style="left:579px;top:106px;width:1px;height:593px;background:#555555;"></div>
<div style="left:580px;top:546px;width:1312px;height:27.5px;background:#3a2323;"></div>
<div style="left:580px;top:601px;width:1312px;height:28px;background:#2d6099;"></div>
<div style="left:1787px;top:106px;width:1px;height:593px;background:#4b4b4b;"></div>
<div style="left:625px;top:216.0px;width:1px;height:110.0px;background:#393939;"></div>
<div style="left:625px;top:546.0px;width:1px;height:82.5px;background:#393939;"></div>
<div style="left:1881px;top:139px;width:10px;height:444.5px;background:rgba(132,134,136,0.38);"></div>
<div style="left:1875px;top:470.5px;width:17px;height:2px;background:#6f4a3a;"></div>
<div style="left:1875px;top:511.5px;width:17px;height:2px;background:#c4a11f;"></div>
<div class="ed" style="left:507px;top:106px;width:1385px;height:593px;overflow:hidden;">
<span class="ln" style="top:0.0px;color:#606366">1</span>
<pre class="cl" style="top:0.0px"><b class="k">package </b>com.atguigu.constructor<b class="k">;</b></pre>
<span class="ln" style="top:27.5px;color:#606366">2</span>
<span class="ln" style="top:55.0px;color:#606366">3</span>
<pre class="cl" style="top:55.0px"><b class="k">public class </b>ConstructorTest {</pre>
<span class="ln" style="top:82.5px;color:#606366">4</span>
<pre class="cl" style="top:82.5px">    <b class="k">public static void </b><b class="m">main</b>(String[] args) {</pre>
<span class="ln" style="top:110.0px;color:#606366">5</span>
<span class="ln" style="top:137.5px;color:#606366">6</span>
<pre class="cl" style="top:137.5px">        person jack = <b class="k">new </b>person(<i class="h" style="width:56px;margin:0 2px 0 3px">name:</i><b class="s">"jack"</b><b class="k">,</b> <i class="h" style="width:44px;margin:0 3px 0 2px">age:</i><b class="n">18</b>)<b class="k">;</b></pre>
<span class="ln" style="top:165.0px;color:#606366">7</span>
<pre class="cl" style="top:165.0px">        System.<b class="fi">out</b>.println(jack.<b class="f">age</b>)<b class="k">;</b></pre>
<span class="ln" style="top:192.5px;color:#606366">8</span>
<pre class="cl" style="top:192.5px">        System.<b class="fi">out</b>.println(jack.<b class="f">name</b>)<b class="k">;</b></pre>
<span class="ln" style="top:220.0px;color:#606366">9</span>
<pre class="cl" style="top:220.0px">    }</pre>
<span class="ln" style="top:247.5px;color:#606366">10</span>
<pre class="cl" style="top:247.5px">}</pre>
<span class="ln" style="top:275.0px;color:#606366">11</span>
<span class="ln" style="top:302.5px;color:#606366">12</span>
<pre class="cl" style="top:302.5px"><b class="k">class </b>person{<i class="u" style="width:90px">2 usages</i></pre>
<span class="ln" style="top:330.0px;color:#606366">13</span>
<pre class="cl" style="top:330.0px">    String <b class="f">name</b><b class="k">;</b><i class="u" style="width:160px">1 usage</i><b class="dv">name: null</b></pre>
<span class="ln" style="top:357.5px;color:#606366">14</span>
<pre class="cl" style="top:357.5px">    <b class="k">int </b><b class="f">age</b><b class="k">;</b><i class="u" style="width:160px">1 usage</i><b class="dv">age: 0</b></pre>
<span class="ln" style="top:385.0px;color:#606366">15</span>
<span class="ln" style="top:412.5px;color:#606366">16</span>
<pre class="cl" style="top:412.5px">    <b class="k">public </b><b class="m">person</b>(String <b class="pu">name</b><b class="k">, int </b><b class="pu">age</b>){<i class="u" style="width:160px">1 usage</i><b class="dv">name: "jack"    age: 18</b></pre>
<span class="ln" style="top:440.0px;color:#606366">17</span>
<pre class="cl" style="top:440.0px">        System.<b class="fi">out</b>.println(<b class="s">"person constructor"</b>)<b class="k">;</b></pre>
<span class="ln" style="top:467.5px;color:#606366">18</span>
<pre class="cl" style="top:467.5px">        <b class="pu">name</b> = <b class="pu">name</b><b class="k">;</b><b class="dv" style="margin-left:25px">name: "jack"</b></pre>
<span class="ln" style="top:495.0px;color:#a4a3a3">19</span>
<pre class="cl" style="top:495.0px">        <b class="pu g">age</b> = <b class="pu g">age</b><b class="k">;</b><b class="dv x" style="margin-left:25px">age: 18</b></pre>
<span class="ln" style="top:522.5px;color:#606366">20</span>
<pre class="cl" style="top:522.5px">    }</pre>
<span class="ln" style="top:550.0px;color:#606366">21</span>
<pre class="cl" style="top:550.0px">}</pre>
<span class="ln" style="top:577.5px;color:#606366">22</span>
</div>
<svg style="left:545px;top:167.2px;" width="11" height="15" viewBox="0 0 11 15"><path d="M0 0 L10.3 7.2 L0 14.4 Z" fill="#499c54"/></svg>
<svg style="left:545px;top:194.7px;" width="11" height="15" viewBox="0 0 11 15"><path d="M0 0 L10.3 7.2 L0 14.4 Z" fill="#499c54"/></svg>
<svg style="left:543.5px;top:550px;" width="19" height="19" viewBox="0 0 19 19"><circle cx="9.3" cy="10" r="8" fill="#c75450"/><path d="M5.6 5.4 L9.6 8.6 L15.6 0.8" fill="none" stroke="#313335" stroke-width="3.2"/><path d="M5.6 5.4 L9.6 8.6 L15.6 0.8" fill="none" stroke="#e8e8e8" stroke-width="1.5"/></svg>
<svg style="left:573.7px;top:170.1px;" width="12" height="16" viewBox="0 0 12 16"><path d="M1 1 H11 V9.2 L6 15 L1 9.2 Z" fill="#2b2b2b" stroke="#5e6062" stroke-width="1.1"/><path d="M2.6 6.1 H9.4" stroke="#5e6062" stroke-width="1.1"/></svg>
<svg style="left:573.7px;top:197.6px;" width="12" height="16" viewBox="0 0 12 16"><path d="M1 1 H11 V9.2 L6 15 L1 9.2 Z" fill="#2b2b2b" stroke="#5e6062" stroke-width="1.1"/><path d="M2.6 6.1 H9.4" stroke="#5e6062" stroke-width="1.1"/></svg>
<svg style="left:573.7px;top:417.6px;" width="12" height="16" viewBox="0 0 12 16"><path d="M1 1 H11 V9.2 L6 15 L1 9.2 Z" fill="#2b2b2b" stroke="#5e6062" stroke-width="1.1"/><path d="M2.6 6.1 H9.4" stroke="#5e6062" stroke-width="1.1"/></svg>
<svg style="left:573.7px;top:527.6px;" width="12" height="16" viewBox="0 0 12 16"><path d="M1 1 H11 V9.2 L6 15 L1 9.2 Z" fill="#2b2b2b" stroke="#5e6062" stroke-width="1.1"/><path d="M2.6 6.1 H9.4" stroke="#5e6062" stroke-width="1.1"/></svg>
<svg style="left:573.7px;top:330.9px;" width="12" height="16" viewBox="0 0 12 16"><path d="M1 15 H11 V6.8 L6 1 L1 6.8 Z" fill="#2b2b2b" stroke="#5e6062" stroke-width="1.1"/><path d="M2.6 10.4 H9.4" stroke="#5e6062" stroke-width="1.1"/></svg>
<svg style="left:573.7px;top:358.4px;" width="12" height="16" viewBox="0 0 12 16"><path d="M1 15 H11 V6.8 L6 1 L1 6.8 Z" fill="#2b2b2b" stroke="#5e6062" stroke-width="1.1"/><path d="M2.6 10.4 H9.4" stroke="#5e6062" stroke-width="1.1"/></svg>
<svg style="left:573.7px;top:633.4px;" width="12" height="16" viewBox="0 0 12 16"><path d="M1 15 H11 V6.8 L6 1 L1 6.8 Z" fill="#2b2b2b" stroke="#5e6062" stroke-width="1.1"/><path d="M2.6 10.4 H9.4" stroke="#5e6062" stroke-width="1.1"/></svg>
<svg style="left:573.7px;top:660.9px;" width="12" height="16" viewBox="0 0 12 16"><path d="M1 15 H11 V6.8 L6 1 L1 6.8 Z" fill="#2b2b2b" stroke="#5e6062" stroke-width="1.1"/><path d="M2.6 10.4 H9.4" stroke="#5e6062" stroke-width="1.1"/></svg>
<svg style="left:1805px;top:115px;" width="16" height="15" viewBox="0 0 16 15"><path d="M8 0.8 L15.4 14.2 H0.6 Z" fill="#d9a61c"/><path d="M8 5 V10" stroke="#2b2b2b" stroke-width="1.8"/><circle cx="8" cy="12.1" r="1" fill="#2b2b2b"/></svg>
<span class="t" style="left:1824.6px;top:115.76px;font-size:16px;color:#bbbbbb;letter-spacing:-1.106px;">5</span>
<svg style="left:1845px;top:118px;" width="12" height="8" viewBox="0 0 12 8"><path d="M1 7 L6 1.8 L11 7" fill="none" stroke="#c4c6c8" stroke-width="1.6"/></svg>
<svg style="left:1872px;top:119px;" width="12" height="8" viewBox="0 0 12 8"><path d="M1 1 L6 6.2 L11 1" fill="none" stroke="#c4c6c8" stroke-width="1.6"/></svg>
<div style="left:612.9px;top:570.8px;width:374.2px;height:69px;border:4.2px solid #f4271c;border-radius:4.5px;box-sizing:border-box;"></div>
</main>
<section class="debug">
<div style="left:27px;top:699.4px;width:1865px;height:34.6px;background:#3b4754;"></div>
<div style="left:27px;top:733px;width:1865px;height:1px;background:#323232;"></div>
<div style="left:63px;top:768px;width:1829px;height:1px;background:#323232;"></div>
<div style="left:62px;top:734px;width:1px;height:232px;background:#323232;"></div>
<div style="left:27px;top:966px;width:1865px;height:1px;background:#323232;"></div>
<span class="t" style="left:35.75px;top:708.73px;font-size:16.5px;color:#bbbbbb;letter-spacing:-0.267px;">Debug:</span>
<svg style="left:111.5px;top:706.5px;" width="21" height="20" viewBox="0 0 21 20"><rect x="4.5" y="1.6" width="13.2" height="10.6" fill="none" stroke="#7d8890" stroke-width="1.4"/><rect x="0" y="4.4" width="16.6" height="13.2" fill="#3b4754"/><rect x="0.6" y="5" width="15.4" height="11.9" fill="#87929a"/><rect x="3.4" y="7.9" width="10.4" height="6.8" fill="#3a8db0"/><circle cx="17.2" cy="17.4" r="3.2" fill="#3b4754"/><circle cx="17.2" cy="17.4" r="2.5" fill="#12e212"/></svg>
<span class="t" style="left:136.4px;top:708.73px;font-size:16.5px;color:#bbbbbb;letter-spacing:0.128px;">ConstructorTest</span>
<svg style="left:263.2px;top:713px;" width="10" height="10" viewBox="0 0 10 10"><path d="M0.8 0.8 L9.2 9.2 M9.2 0.8 L0.8 9.2" stroke="#7d8388" stroke-width="1.2"/></svg>
<div style="left:97px;top:729.8px;width:189.6px;height:3.5px;background:#4a88c7;border-radius:2px;"></div>
<svg style="left:1835.2px;top:707.2px;" width="17.6" height="17.6" viewBox="0 0 16 16"><path fill-rule="evenodd" d="M9.80 3.23 L9.71 1.01 L6.29 1.01 L6.20 3.23 L4.76 4.06 L2.80 3.02 L1.09 5.99 L2.97 7.17 L2.97 8.83 L1.09 10.01 L2.80 12.98 L4.76 11.94 L6.20 12.77 L6.29 14.99 L9.71 14.99 L9.80 12.77 L11.24 11.94 L13.20 12.98 L14.91 10.01 L13.03 8.83 L13.03 7.17 L14.91 5.99 L13.20 3.02 L11.24 4.06 Z M8 5.2 a2.8 2.8 0 1 0 0.001 0 Z" fill="#b4b6b8" stroke="#b4b6b8" stroke-width="0.6" stroke-linejoin="round"/></svg>
<div style="left:1868px;top:714.8px;width:16px;height:2.4px;background:#b4b6b8;"></div>
<svg style="left:36px;top:742px;" width="19" height="19" viewBox="0 0 19 19"><path d="M12 5.5 H8.4 A5.5 5.5 0 1 0 8.4 16.6" fill="none" stroke="#499c54" stroke-width="2.7"/><path d="M11.3 0.2 L18 5.5 L11.3 10.8 Z" fill="#499c54"/><rect x="9.4" y="10.8" width="8.2" height="7.6" fill="#3c3f41"/><rect x="10.2" y="11.5" width="6.8" height="6.3" fill="#b4b6b8"/></svg>
<svg style="left:36px;top:776px;" width="19" height="19" viewBox="0 0 19 19"><path d="M17.6 4.6 a4.8 4.8 0 0 1 -6.4 5.4 L4 17.4 a1.9 1.9 0 0 1 -2.8 -2.8 L8.6 7.6 a4.8 4.8 0 0 1 5.6 -6.2 L11.2 4.4 L11.8 7 L14.4 7.6 Z" fill="#afb1b3"/></svg>
<div style="left:33px;top:804px;width:24px;height:1px;background:#4d5052;"></div>
<svg style="left:39px;top:816.8px;" width="15" height="15" viewBox="0 0 15 15"><rect x="0" y="0.4" width="3.4" height="14.2" fill="#499c54"/><path d="M5.6 0.2 L14.8 7.5 L5.6 14.8 Z" fill="#499c54"/></svg>
<svg style="left:40.2px;top:850px;" width="11" height="14" viewBox="0 0 11 14"><rect x="0" y="0" width="3.4" height="13.8" fill="#585b5d"/><rect x="6.8" y="0" width="3.4" height="13.8" fill="#585b5d"/></svg>
<div style="left:38.8px;top:883.5px;width:12.6px;height:12.6px;background:#c75450;"></div>
<div style="left:33px;top:910px;width:24px;height:1px;background:#4d5052;"></div>
<svg style="left:36px;top:921px;" width="19" height="19" viewBox="0 0 19 19"><circle cx="11.5" cy="6.5" r="6" fill="#c75450"/><circle cx="6.5" cy="12" r="6.6" fill="#3c3f41"/><circle cx="6.5" cy="12" r="5.6" fill="#c75450"/></svg>
<span class="t" style="left:40px;top:946.41px;font-size:17px;color:#afb1b3;letter-spacing:0.531px;">»</span>
<span class="t" style="left:80.7px;top:745.95px;font-size:14px;color:#bbbbbb;letter-spacing:-0.187px;">Debugger</span>
<div style="left:64px;top:767.4px;width:92.9px;height:2.3px;background:#4a88c7;"></div>
<svg style="left:165.2px;top:752.2px;" width="9" height="9" viewBox="0 0 9 9"><circle cx="4.3" cy="4.3" r="4.2" fill="#f0a732"/><path d="M4.3 1.2 V6.6 M2 4.4 L4.3 6.8 L6.6 4.4" stroke="#3c3f41" stroke-width="1.3" fill="none"/></svg>
<span class="t" style="left:174.3px;top:745.95px;font-size:14px;color:#bbbbbb;letter-spacing:-0.550px;">Console</span>
<svg style="left:246.3px;top:744.6px;" width="16" height="15" viewBox="0 0 16 15"><path d="M0 1.6 H15.6 M0 12.8 H15.6" stroke="#c4c6c8" stroke-width="2.5"/><path d="M0 7.1 H15.6" stroke="#389fd6" stroke-width="3.8"/></svg>
<div style="left:274px;top:739.5px;width:1px;height:24px;background:#555759;"></div>
<svg style="left:286px;top:742px;" width="18" height="19" viewBox="0 0 18 19"><path d="M1.3 9.4 L7.8 2.2 L13.4 8" fill="none" stroke="#389fd6" stroke-width="2.4"/><path d="M9.6 11.8 H16.6 V4.6 Z" fill="#389fd6"/><rect x="1.2" y="14" width="15.8" height="2.6" fill="#c4c6c8"/></svg>
<svg style="left:320px;top:742px;" width="16" height="19" viewBox="0 0 16 19"><path d="M8 0 V9" stroke="#389fd6" stroke-width="2.4"/><path d="M2.4 6.5 H13.6 L8 12.6 Z" fill="#389fd6"/><rect x="0.2" y="14" width="15.6" height="2.6" fill="#c4c6c8"/></svg>
<svg style="left:352px;top:742px;" width="16" height="19" viewBox="0 0 16 19"><path d="M8 3 V13" stroke="#389fd6" stroke-width="2.4"/><path d="M2.4 6.4 H13.6 L8 0.3 Z" fill="#389fd6"/><rect x="0.2" y="14" width="15.6" height="2.6" fill="#c4c6c8"/></svg>
<svg style="left:384px;top:742px;" width="19" height="20" viewBox="0 0 19 20"><path d="M1.5 1.5 L8 8" stroke="#389fd6" stroke-width="2.4"/><path d="M3.4 9.6 H9.6 V3.4 Z" fill="#389fd6"/><path d="M11.5 8 H17 M14.2 8 V18.6 M11.5 18.6 H17" stroke="#c4c6c8" stroke-width="1.3" fill="none"/></svg>
<div style="left:413px;top:739.5px;width:1px;height:24px;background:#555759;"></div>
<svg style="left:426.5px;top:744px;" width="15" height="15" viewBox="0 0 15 15"><rect x="0.9" y="0.9" width="13.2" height="13.2" fill="none" stroke="#c4c6c8" stroke-width="1.8"/><path d="M1 5.2 H14 M1 9.6 H14 M5.4 5 V14 M9.7 5 V14" stroke="#c4c6c8" stroke-width="1.3"/><rect x="1" y="1" width="13" height="3.6" fill="#c4c6c8"/></svg>
<svg style="left:458px;top:745px;" width="16" height="13" viewBox="0 0 16 13"><path d="M0 1.5 H6 M0 6.5 H5 M0 11.5 H6 M10 1.5 H16 M11 6.5 H16 M10 11.5 H16 M10.5 0 L5.5 13" stroke="#5d6062" stroke-width="1.4" fill="none"/></svg>
<svg style="left:1870px;top:744px;" width="19" height="17" viewBox="0 0 19 17"><rect x="0.5" y="0.5" width="6.5" height="6" fill="#c4c6c8"/><rect x="8.5" y="0.5" width="6.5" height="6" fill="#c4c6c8"/><rect x="0.5" y="8" width="14.5" height="4.6" fill="#c4c6c8"/><path d="M11.5 13.2 H18.5 L15 16.6 Z" fill="#c4c6c8"/></svg>
<span class="t" style="left:80.4px;top:782.15px;font-size:14px;color:#bbbbbb;letter-spacing:-0.791px;">Frames</span>
<div style="left:64px;top:802.4px;width:77px;height:2.3px;background:#6e7275;"></div>
<span class="t" style="left:156px;top:782.15px;font-size:14px;color:#bbbbbb;letter-spacing:-0.563px;">Threads</span>
<div style="left:63px;top:804.4px;width:340px;height:1px;background:#323232;"></div>
<div style="left:402px;top:769px;width:2px;height:197px;background:#323232;"></div>
<svg style="left:76px;top:815px;" width="18" height="15" viewBox="0 0 18 15"><path d="M1.5 8.5 L6 13 L16.5 1.5" fill="none" stroke="#e8703a" stroke-width="2.6"/></svg>
<span class="t" style="left:100px;top:816.13px;font-size:16.5px;color:#bbbbbb;letter-spacing:-0.354px;">"main"@1 in g...ain": RUNNING</span>
<div style="left:338.5px;top:809px;width:28px;height:27px;background:#5c6164;border-radius:4px;"></div>
<svg style="left:344px;top:815px;" width="17" height="15" viewBox="0 0 17 15"><path d="M0.5 0.5 H16.5 L10.4 7.6 V14.5 L6.6 12.4 V7.6 Z" fill="#e0e0e0"/></svg>
<svg style="left:379px;top:819px;" width="11" height="7" viewBox="0 0 11 7"><path d="M0.2 0.3 H10.8 L5.5 6.6 Z" fill="#afb1b3"/></svg>
<div style="left:64px;top:841px;width:338px;height:26px;background:#0d293e;"></div>
<svg style="left:75px;top:845px;" width="16" height="16" viewBox="0 0 16 16"><path d="M5 1.5 L1.5 5 L5 8.5 M1.5 5 H10 A4.4 4.4 0 0 1 10 13.8 H4" fill="none" stroke="#e0e0e0" stroke-width="1.4"/></svg>
<div style="left:64px;top:841px;width:338px;height:60px;overflow:hidden;">
<span class="t" style="left:33.7px;top:5.33px;font-size:16.5px;color:#e6e6e6;letter-spacing:0.065px;">&lt;init&gt;:19, person</span>
<span class="t" style="left:163.5px;top:5.33px;font-size:16.5px;color:#e6e6e6;font-style:italic;letter-spacing:0.160px;">(com.atguigu.constructor)</span>
<span class="t" style="left:32.3px;top:31.13px;font-size:16.5px;color:#bbbbbb;letter-spacing:-0.055px;">main:6, ConstructorTest</span>
<span class="t" style="left:211px;top:31.13px;font-size:16.5px;color:#787878;font-style:italic;letter-spacing:0.160px;">(com.atguigu.constructor)</span>
</div>
<div style="left:64px;top:927px;width:277px;height:9.6px;background:#595b5d;"></div>
<span class="t" style="left:74px;top:946.83px;font-size:14.5px;color:#868889;letter-spacing:-0.275px;">Switch frames from anywhere in the IDE with Ct..</span>
<svg style="left:383px;top:948.5px;" width="10" height="10" viewBox="0 0 10 10"><path d="M0.8 0.8 L9.2 9.2 M9.2 0.8 L0.8 9.2" stroke="#6e7072" stroke-width="1.2"/></svg>
<div style="left:404px;top:769px;width:1217px;height:35.5px;background:#45494a;"></div>
<div style="left:404px;top:804.5px;width:1217px;height:1px;background:#323232;"></div>
<span class="t mo" style="left:413.3px;top:781.11px;font-size:15px;color:#787878;letter-spacing:-0.058px;">Evaluate expression (Enter) or add a watch (Ctrl+Shift+Enter)</span>
<svg style="left:1565px;top:780px;" width="17" height="19" viewBox="0 0 17 19"><path d="M6.5 0.5 V13 M0.5 6.5 H13" stroke="#606365" stroke-width="1.5"/><circle cx="9.8" cy="15.5" r="2" fill="none" stroke="#606365" stroke-width="1.1"/><circle cx="14.3" cy="15.5" r="2" fill="none" stroke="#606365" stroke-width="1.1"/></svg>
<svg style="left:1597.5px;top:784px;" width="12" height="7" viewBox="0 0 12 7"><path d="M0.2 0.3 H11.8 L6 6.6 Z" fill="#afb1b3"/></svg>
<svg style="left:408.4px;top:807.7px;" width="20" height="20" viewBox="0 0 16 16"><path d="M4 6.2 L8 10.2 L12 6.2" fill="none" stroke="#adb0b3" stroke-width="1.4"/></svg>
<svg style="left:437.5px;top:811.2px;" width="13" height="14" viewBox="0 0 13 14"><path d="M0 1.6 H13 M0 6.9 H13 M0 12.2 H13" stroke="#b98a2f" stroke-width="3.2"/></svg>
<span class="t" style="left:458.6px;top:811.13px;font-size:16.5px;color:#ee8587;letter-spacing:-0.154px;">this</span>
<div style="left:457px;top:835.3px;width:18px;height:18px;border-radius:9px;background:#b98a2f;"></div>
<span class="t" style="left:463.4px;top:836.97px;font-size:13.5px;color:#5a3e12;">f</span>
<span class="t" style="left:480.6px;top:836.13px;font-size:16.5px;color:#ee8587;letter-spacing:-0.680px;">name</span>
<div style="left:457px;top:860.3px;width:18px;height:18px;border-radius:9px;background:#b98a2f;"></div>
<span class="t" style="left:463.4px;top:861.97px;font-size:13.5px;color:#5a3e12;">f</span>
<span class="t" style="left:480.6px;top:861.13px;font-size:16.5px;color:#ee8587;letter-spacing:-0.553px;">age</span>
<svg style="left:408.2px;top:882.6px;" width="20" height="20" viewBox="0 0 16 16"><path d="M6.2 4 L10.2 8 L6.2 12" fill="none" stroke="#adb0b3" stroke-width="1.4"/></svg>
<div style="left:435px;top:885.3px;width:18px;height:18px;border-radius:9px;background:#b98a2f;"></div>
<span class="t" style="left:439.8px;top:886.17px;font-size:13.5px;color:#5a3e12;">p</span>
<span class="t" style="left:458.6px;top:886.13px;font-size:16.5px;color:#ee8587;letter-spacing:-0.680px;">name</span>
<div style="left:435px;top:910.3px;width:18px;height:18px;border-radius:9px;background:#b98a2f;"></div>
<span class="t" style="left:439.8px;top:911.17px;font-size:13.5px;color:#5a3e12;">p</span>
<span class="t" style="left:458.6px;top:911.13px;font-size:16.5px;color:#ee8587;letter-spacing:-0.653px;">age</span>
<span class="t" style="left:489.5px;top:811.13px;font-size:16.5px;color:#bbbbbb;">=</span>
<span class="t" style="left:503.75px;top:811.13px;font-size:16.5px;color:#8c8e90;letter-spacing:-0.327px;">{person@503}</span>
<span class="t" style="left:525.2px;top:836.13px;font-size:16.5px;color:#bbbbbb;letter-spacing:-0.110px;">= null</span>
<span class="t" style="left:512.5px;top:861.13px;font-size:16.5px;color:#bbbbbb;letter-spacing:-0.562px;">= 0</span>
<span class="t" style="left:503.75px;top:886.13px;font-size:16.5px;color:#bbbbbb;">=</span>
<span class="t" style="left:518.25px;top:886.13px;font-size:16.5px;color:#6a8759;letter-spacing:-0.239px;">"jack"</span>
<span class="t" style="left:490.75px;top:911.13px;font-size:16.5px;color:#bbbbbb;letter-spacing:-0.451px;">= 18</span>
<div style="left:398px;top:798px;width:449px;height:148.8px;border:4.5px solid #f4271c;border-radius:4px;box-sizing:border-box;"></div>
<div style="left:1621px;top:769px;width:1px;height:197px;background:#323232;"></div>
<span class="t" style="left:1639.3px;top:782.15px;font-size:14px;color:#bbbbbb;letter-spacing:0.207px;">Memory</span>
<div style="left:1622px;top:802.6px;width:85px;height:2.3px;background:#6e7275;"></div>
<span class="t" style="left:1723.3px;top:782.15px;font-size:14px;color:#bbbbbb;letter-spacing:-0.278px;">Overhead</span>
<div style="left:1622px;top:804.5px;width:270px;height:1px;background:#323232;"></div>
<div style="left:1627px;top:809px;width:231px;height:29px;background:#45494a;border:1px solid #646464;border-radius:3px;box-sizing:border-box;"></div>
<svg style="left:1636px;top:816px;" width="16" height="16" viewBox="0 0 16 16"><circle cx="6.5" cy="6.5" r="5" fill="none" stroke="#9aa0a5" stroke-width="1.4"/><path d="M10.2 10.2 L14.8 14.8" stroke="#9aa0a5" stroke-width="1.5"/></svg>
<svg style="left:1867.2px;top:814.2px;" width="17.6" height="17.6" viewBox="0 0 16 16"><path fill-rule="evenodd" d="M9.80 3.23 L9.71 1.01 L6.29 1.01 L6.20 3.23 L4.76 4.06 L2.80 3.02 L1.09 5.99 L2.97 7.17 L2.97 8.83 L1.09 10.01 L2.80 12.98 L4.76 11.94 L6.20 12.77 L6.29 14.99 L9.71 14.99 L9.80 12.77 L11.24 11.94 L13.20 12.98 L14.91 10.01 L13.03 8.83 L13.03 7.17 L14.91 5.99 L13.20 3.02 L11.24 4.06 Z M8 5.2 a2.8 2.8 0 1 0 0.001 0 Z" fill="#b4b6b8" stroke="#b4b6b8" stroke-width="0.6" stroke-linejoin="round"/></svg>
<svg style="left:1882px;top:829px;" width="7" height="5" viewBox="0 0 7 5"><path d="M0 0.3 H7 L3.5 4.6 Z" fill="#c4c6c8"/></svg>
<div style="left:1622px;top:842px;width:270px;height:30px;background:#414547;"></div>
<div style="left:1622px;top:872px;width:270px;height:1px;background:#323232;"></div>
<div style="left:1692.3px;top:844px;width:1.6px;height:27px;background:#303234;"></div>
<div style="left:1792.3px;top:844px;width:1.6px;height:27px;background:#303234;"></div>
<span class="t" style="left:1633.3px;top:850.23px;font-size:16.5px;color:#bbbbbb;letter-spacing:-1.237px;">Class</span>
<span class="t" style="left:1703.3px;top:850.23px;font-size:16.5px;color:#bbbbbb;letter-spacing:-0.140px;">Count</span>
<span class="t" style="left:1803.3px;top:850.23px;font-size:16.5px;color:#bbbbbb;letter-spacing:0.156px;">Diff</span>
<svg style="left:1837px;top:855px;" width="12" height="7" viewBox="0 0 12 7"><path d="M0.2 0.3 H11.8 L6 6.6 Z" fill="#afb1b3"/></svg>
<span class="t" style="left:1640.7px;top:900.23px;font-size:16.5px;color:#787878;letter-spacing:-0.333px;">No classes loaded.</span>
<span class="t" style="left:1779.3px;top:900.23px;font-size:16.5px;color:#589df6;letter-spacing:-0.636px;">Load classes</span>
</section>
<aside class="right-stripe">
<div style="left:1892px;top:72px;width:28px;height:923px;background:#3c3f41;"></div>
<div style="left:1892px;top:72px;width:1px;height:895px;background:#323232;"></div>
<span class="t" style="left:1898.4px;top:82.6px;font-size:18.5px;font-weight:700;font-style:italic;color:#b4b6b8;">m</span>
<span class="t" style="left:1904.3px;top:106.7px;transform:rotate(90deg) translateY(-50%);transform-origin:0 0;font-size:13.5px;color:#bbbbbb;letter-spacing:0.104px;">Maven</span>
<svg style="left:1899px;top:174px;" width="17" height="17" viewBox="0 0 17 17"><circle cx="9.4" cy="3.4" r="3" fill="#afb1b3"/><circle cx="3.4" cy="13.2" r="3.1" fill="#afb1b3"/><circle cx="13" cy="13.2" r="3.1" fill="#afb1b3"/><path d="M9.4 3.4 L3.4 13.2 M9.4 3.4 L13 13.2 M0.8 6.4 L2.4 9.6 M16.2 6.4 L14.6 9.6" stroke="#afb1b3" stroke-width="1.5" fill="none"/></svg>
<span class="t" style="left:1904.3px;top:196px;transform:rotate(90deg) translateY(-50%);transform-origin:0 0;font-size:13.5px;color:#bbbbbb;letter-spacing:-0.053px;">Endpoints</span>
<svg style="left:1899px;top:284.5px;" width="16" height="16" viewBox="0 0 16 16"><path d="M8.9 6.7 L9.2 6.8 L9.5 7.0 L9.7 7.3 L9.9 7.6 L10.0 8.0 L10.1 8.4 L10.1 8.8 L9.9 9.2 L9.7 9.6 L9.4 10.0 L9.1 10.3 L8.7 10.6 L8.2 10.7 L7.6 10.8 L7.1 10.8 L6.6 10.6 L6.0 10.4 L5.6 10.0 L5.2 9.6 L4.8 9.0 L4.6 8.4 L4.5 7.8 L4.5 7.1 L4.7 6.4 L5.0 5.8 L5.4 5.2 L5.9 4.7 L6.5 4.3 L7.2 4.0 L8.0 3.8 L8.8 3.8 L9.6 3.9 L10.4 4.2 L11.1 4.7 L11.7 5.3 L12.3 6.0 L12.7 6.8 L12.9 7.7 L12.9 8.6 L12.8 9.6 L12.5 10.5 L12.0 11.3 L11.4 12.1 L10.6 12.7 L9.7 13.2 L8.7 13.5 L7.6 13.7 L6.6 13.6 L5.5 13.3 L4.5 12.8 L3.6 12.1 L2.8 11.3 L2.2 10.3 L1.8 9.2 L1.6 8.0 L1.7 6.8 L1.9 5.6 L2.4 4.4 L3.1 3.4 L4.0 2.5" fill="none" stroke="#a4a6a8" stroke-width="1.5" stroke-linecap="round" stroke-linejoin="round"/></svg>
<span class="t" style="left:1904.3px;top:305.4px;transform:rotate(90deg) translateY(-50%);transform-origin:0 0;font-size:13.5px;color:#bbbbbb;letter-spacing:0.161px;">AI Assistant</span>
<svg style="left:1899px;top:404px;" width="15" height="15" viewBox="0 0 15 15"><ellipse cx="7.5" cy="3" rx="6.5" ry="2.6" fill="#afb1b3"/><path d="M1 5.2 Q7.5 9 14 5.2 V7.4 Q7.5 11.2 1 7.4 Z M1 9 Q7.5 12.8 14 9 V11.4 Q7.5 15.2 1 11.4 Z" fill="#afb1b3"/></svg>
<span class="t" style="left:1904.3px;top:426.4px;transform:rotate(90deg) translateY(-50%);transform-origin:0 0;font-size:13.5px;color:#bbbbbb;letter-spacing:-0.333px;">Database</span>
<svg style="left:1898px;top:509px;" width="17" height="17" viewBox="0 0 17 17"><path d="M2 12.5 Q4 11 4 7.5 Q4 3 8 3 Q12 3 12 7.5 Q12 11 14 12.5 Z" fill="#afb1b3"/><rect x="6.4" y="13.6" width="3.2" height="2" fill="#afb1b3"/><circle cx="13.2" cy="3.4" r="2.9" fill="#e05555"/></svg>
<span class="t" style="left:1904.3px;top:531.5px;transform:rotate(90deg) translateY(-50%);transform-origin:0 0;font-size:13.5px;color:#bbbbbb;letter-spacing:0.332px;">Notifications</span>
<svg style="left:1900px;top:875px;" width="14" height="16" viewBox="0 0 14 16"><path d="M0.8 1 H13.2 V8 Q13.2 13 7 15.4 Q0.8 13 0.8 8 Z" fill="#afb1b3"/><path d="M7 3.2 V13 Q3 11.2 3 8 V3.2 Z" fill="#3c3f41"/></svg>
<span class="t" style="left:1904.3px;top:896.8px;transform:rotate(90deg) translateY(-50%);transform-origin:0 0;font-size:13.5px;color:#bbbbbb;letter-spacing:-0.260px;">Coverage</span>
</aside>
<footer class="tool-stripe">
<div style="left:0px;top:967px;width:1920px;height:28px;background:#3c3f41;"></div>
<div style="left:0px;top:994px;width:1920px;height:1px;background:#454544;"></div>
<div style="left:241.3px;top:967px;width:87.4px;height:27px;background:#2d2f30;"></div>
<svg style="left:43px;top:975px;" width="11" height="15" viewBox="0 0 11 15"><circle cx="2.6" cy="2.6" r="2" fill="#afb1b3"/><circle cx="8.4" cy="4.6" r="2" fill="#afb1b3"/><path d="M2.6 2.6 V14.5 M2.6 11 Q8.4 10.6 8.4 4.6" fill="none" stroke="#afb1b3" stroke-width="1.5"/></svg>
<span class="t" style="left:63.3px;top:975.93px;font-size:14.5px;color:#bbbbbb;letter-spacing:-0.237px;">Version Control</span>
<svg style="left:186.5px;top:977px;" width="11" height="12" viewBox="0 0 11 12"><path d="M0.5 0.5 L10.5 6 L0.5 11.5 Z" fill="#afb1b3"/></svg>
<span class="t" style="left:206px;top:975.93px;font-size:14.5px;color:#bbbbbb;letter-spacing:-1.324px;">Run</span>
<svg style="left:254px;top:974px;" width="17" height="17" viewBox="0 0 17 17"><ellipse cx="7.5" cy="9.6" rx="4.4" ry="5.2" fill="#c4c6c8"/><path d="M4.2 4.6 a3.3 3.3 0 0 1 6.6 0 Z" fill="#c4c6c8"/><path d="M0.6 6.4 L4 8 M14.4 6.4 L11 8 M0.2 10.4 H3.4 M11.6 10.4 H14.8 M1 15 L4 12.8 M14 15 L11 12.8 M4 1 L5.6 3 M11 1 L9.4 3" stroke="#c4c6c8" stroke-width="1.3" fill="none"/><circle cx="13.8" cy="14.2" r="2.6" fill="#2d2f30"/><circle cx="13.8" cy="14.2" r="1.9" fill="#3fd45b"/></svg>
<span class="t" style="left:275.3px;top:975.93px;font-size:14.5px;color:#ffffff;letter-spacing:-0.608px;">Debug</span>
<svg style="left:343px;top:977px;" width="13" height="11" viewBox="0 0 13 11"><path d="M0 1.2 H2.2 M4 1.2 H13 M0 5.5 H2.2 M4 5.5 H13 M0 9.8 H2.2 M4 9.8 H13" stroke="#afb1b3" stroke-width="1.7"/></svg>
<span class="t" style="left:362.7px;top:975.93px;font-size:14.5px;color:#bbbbbb;letter-spacing:-0.750px;">TODO</span>
<svg style="left:427.5px;top:975px;" width="14" height="14" viewBox="0 0 14 14"><circle cx="7" cy="7" r="6.5" fill="#afb1b3"/><path d="M7 3 V8" stroke="#3c3f41" stroke-width="1.9"/><circle cx="7" cy="10.4" r="1.1" fill="#3c3f41"/></svg>
<span class="t" style="left:448.3px;top:975.93px;font-size:14.5px;color:#bbbbbb;letter-spacing:-0.607px;">Problems</span>
<svg style="left:531.5px;top:975px;" width="15" height="13" viewBox="0 0 15 13"><rect x="0" y="0" width="15" height="13" rx="1" fill="#afb1b3"/><path d="M2.6 3 L5.8 6 L2.6 9" fill="none" stroke="#3c3f41" stroke-width="1.4"/><path d="M7 10 H12" stroke="#3c3f41" stroke-width="1.3"/></svg>
<span class="t" style="left:553.3px;top:975.93px;font-size:14.5px;color:#bbbbbb;letter-spacing:-0.413px;">Terminal</span>
<svg style="left:630px;top:974.5px;" width="16" height="15" viewBox="0 0 16 15"><path d="M4.2 0.4 H11.8 L15.8 7.5 L11.8 14.6 H4.2 L0.2 7.5 Z" fill="#afb1b3"/><path d="M5.8 3.6 L11.6 7.5 L5.8 11.4 Z" fill="#3c3f41"/></svg>
<span class="t" style="left:651px;top:975.93px;font-size:14.5px;color:#bbbbbb;letter-spacing:-0.748px;">Services</span>
<svg style="left:724px;top:973px;" width="17" height="17" viewBox="0 0 17 17"><circle cx="6.6" cy="7" r="5.4" fill="none" stroke="#afb1b3" stroke-width="1.5"/><path d="M6.6 3.6 V7.2 H9.4" fill="none" stroke="#afb1b3" stroke-width="1.3"/><path d="M8.6 6.8 L16.4 11.6 L8.6 16.4 Z" fill="#afb1b3" stroke="#3c3f41" stroke-width="1"/></svg>
<span class="t" style="left:746px;top:975.93px;font-size:14.5px;color:#bbbbbb;letter-spacing:-0.258px;">Profiler</span>
<svg style="left:814px;top:973.5px;" width="18" height="17" viewBox="0 0 18 17"><path d="M1.8 7.4 L9.4 1.6" stroke="#afb1b3" stroke-width="3" fill="none"/><path d="M6 4.8 L15 13.6" stroke="#afb1b3" stroke-width="3" fill="none"/></svg>
<span class="t" style="left:836px;top:975.93px;font-size:14.5px;color:#bbbbbb;letter-spacing:-0.567px;">Build</span>
</footer>
<footer class="statusbar">
<div style="left:0px;top:995px;width:1920px;height:25px;background:#3c3f41;"></div>
<svg style="left:15px;top:1000px;" width="16" height="15" viewBox="0 0 16 15"><rect x="3.6" y="0.7" width="11.6" height="10.6" fill="none" stroke="#afb1b3" stroke-width="1.3"/><rect x="0.7" y="3.6" width="11.6" height="10.6" fill="#3c3f41" stroke="#afb1b3" stroke-width="1.3"/></svg>
<span class="t" style="left:1628.3px;top:999.96px;font-size:16px;color:#bbbbbb;letter-spacing:-0.497px;">19:1</span>
<span class="t" style="left:1674.3px;top:999.96px;font-size:16px;color:#bbbbbb;letter-spacing:-1.737px;">CRLF</span>
<span class="t" style="left:1725px;top:999.96px;font-size:16px;color:#bbbbbb;letter-spacing:-0.584px;">UTF-8</span>
<span class="t" style="left:1782.7px;top:999.96px;font-size:16px;color:#bbbbbb;letter-spacing:-0.326px;">4 spaces</span>
<svg style="left:1859px;top:999px;" width="15" height="16" viewBox="0 0 15 16"><rect x="4.5" y="8" width="10" height="7.5" fill="#c4c6c8"/><path d="M2 8 V4.6 a3 3 0 0 1 6 0 V6" fill="none" stroke="#c4c6c8" stroke-width="1.7"/></svg>
<svg style="left:1890.5px;top:1000px;" width="15" height="15" viewBox="0 0 15 15"><circle cx="7.5" cy="7.5" r="7.2" fill="#c4c6c8"/><path d="M7.5 3.2 V8.6" stroke="#3c3f41" stroke-width="2"/><circle cx="7.5" cy="11.3" r="1.2" fill="#3c3f41"/></svg>
<div style="left:0px;top:1019.7px;width:1920px;height:9.3px;background:linear-gradient(90deg,#e6e7f3 0%,#ebe6ee 12%,#f0e2de 17%,#e6dfdb 30%,#e3dedb 50%,#e4e0e0 70%,#e6e4ea 85%,#eef0f8 100%);"></div>
<div style="left:967px;top:1025px;width:48px;height:4px;background:#eba9a3;border-radius:4px 4px 0 0;"></div>
<div style="left:1188px;top:1025.5px;width:46px;height:3.5px;background:#f3f3f5;border-radius:4px 4px 0 0;"></div>
</footer>
</body>
</html>
